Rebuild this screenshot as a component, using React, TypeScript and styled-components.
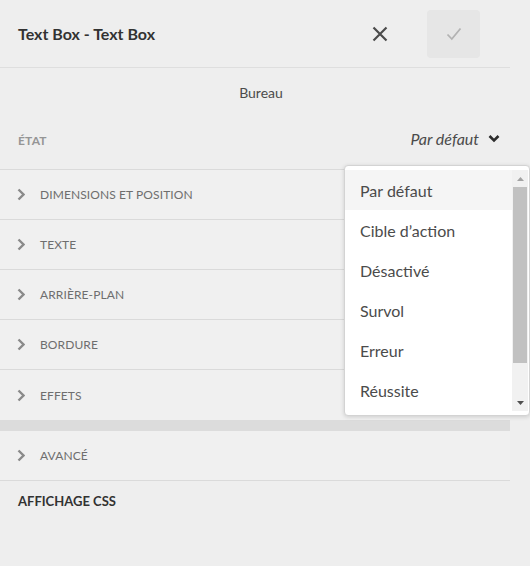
import React from "react";
import styled, { createGlobalStyle } from "styled-components";

const Global = createGlobalStyle`
  html, body { margin: 0; padding: 0; background: #eeeeee; }
  body { font-family: Lato, "Open Sans", sans-serif; color: #4b4b4b; }
  * { box-sizing: border-box; }
`;

const Root = styled.div`
  position: relative;
  width: 530px;
  height: 566px;
  background: #eeeeee;
  overflow: hidden;
`;

const Panel = styled.div`
  width: 510px;
  display: flex;
  flex-direction: column;
`;

const Header = styled.div`
  height: 68px;
  display: flex;
  align-items: center;
  padding: 0 0 0 18px;
  border-bottom: 1px solid #dedede;
`;

const Title = styled.h1`
  margin: 0;
  flex: 1;
  font-size: 16px;
  font-weight: 700;
  color: #323232;
`;

const IconButton = styled.button<{ $disabled?: boolean }>`
  width: 53px;
  height: 48px;
  border: none;
  border-radius: 4px;
  display: flex;
  align-items: center;
  justify-content: center;
  padding: 0;
  background: ${(p) => (p.$disabled ? "#e6e6e6" : "transparent")};
  margin-right: ${(p) => (p.$disabled ? "30px" : "21px")};
`;

const Breakpoint = styled.div`
  height: 48px;
  display: flex;
  align-items: center;
  justify-content: center;
  padding-left: 12px;
  font-size: 14px;
  color: #4b4b4b;
`;

const StateRow = styled.div`
  height: 53px;
  display: flex;
  align-items: center;
  justify-content: space-between;
  padding: 0 10px 8px 18px;
`;

const StateLabel = styled.span`
  font-size: 12px;
  font-weight: 700;
  color: #959595;
  letter-spacing: 0.2px;
  padding-top: 4px;
`;

const StateSelect = styled.div`
  display: flex;
  align-items: center;
  gap: 9px;
  font-size: 16px;
  font-style: italic;
  color: #4b4b4b;
`;

const Sections = styled.div`
  border-top: 1px solid #dadada;
  display: flex;
  flex-direction: column;
`;

const Row = styled.div<{ $last?: boolean }>`
  height: 50px;
  display: flex;
  align-items: center;
  gap: 15px;
  padding-left: 17px;
  background: #f0f0f0;
  border-bottom: ${(p) => (p.$last ? "none" : "1px solid #dadada")};
  font-size: 12px;
  color: #6e6e6e;
  text-transform: uppercase;
  letter-spacing: 0.1px;
`;

const Divider = styled.div`
  height: 11px;
  background: #dcdcdc;
`;

const Footer = styled.div`
  padding: 12px 0 0 18px;
  font-size: 13px;
  font-weight: 700;
  color: #323232;
`;

const Dropdown = styled.div`
  position: absolute;
  left: 344px;
  top: 165px;
  width: 186px;
  height: 251px;
  background: #ffffff;
  border: 1px solid #d3d3d3;
  border-radius: 4px;
  box-shadow: 0 1px 4px rgba(0, 0, 0, 0.15);
  padding: 4px 1px 4px 0;
  display: flex;
`;

const List = styled.ul`
  list-style: none;
  margin: 0;
  padding: 0;
  flex: 1;
`;

const Item = styled.li<{ $active?: boolean }>`
  height: 40px;
  display: flex;
  align-items: center;
  padding-left: 15px;
  font-size: 16px;
  color: #4b4b4b;
  background: ${(p) => (p.$active ? "#f5f5f5" : "transparent")};
`;

const Scrollbar = styled.div`
  width: 16px;
  background: #f1f1f1;
  display: flex;
  flex-direction: column;
`;

const ScrollArrow = styled.div`
  height: 17px;
  display: flex;
  align-items: center;
  justify-content: center;
`;

const Thumb = styled.div`
  height: 176px;
  margin: 0 1px;
  background: #c1c1c1;
`;

const Track = styled.div`
  flex: 1;
`;

const Chevron = () => (
  <svg width="8" height="13" viewBox="0 0 8 13">
    <path d="M1.5 1.5 L6.5 6.5 L1.5 11.5" fill="none" stroke="#8a8a8a" strokeWidth="2.4" />
  </svg>
);

const sections = ["Dimensions et position", "Texte", "Arrière-plan", "Bordure", "Effets"];
const states = ["Par défaut", "Cible d\u2019action", "Désactivé", "Survol", "Erreur", "Réussite"];

export default function App() {
  return (
    <Root>
      <Global />
      <Panel>
        <Header>
          <Title>Text Box - Text Box</Title>
          <IconButton aria-label="Fermer">
            <svg width="16" height="16" viewBox="0 0 16 16">
              <path d="M1.5 1.5 L14.5 14.5 M14.5 1.5 L1.5 14.5" stroke="#4b4b4b" strokeWidth="2.2" />
            </svg>
          </IconButton>
          <IconButton $disabled aria-label="Valider">
            <svg width="16" height="14" viewBox="0 0 16 14">
              <path d="M1.5 7.5 L5.8 12 L14.5 1.5" fill="none" stroke="#b3b3b3" strokeWidth="1.8" />
            </svg>
          </IconButton>
        </Header>
        <Breakpoint>Bureau</Breakpoint>
        <StateRow>
          <StateLabel>ÉTAT</StateLabel>
          <StateSelect>
            Par défaut
            <svg width="12" height="9" viewBox="0 0 12 9">
              <path d="M1.5 2 L6 6.5 L10.5 2" fill="none" stroke="#2c2c2c" strokeWidth="2.6" />
            </svg>
          </StateSelect>
        </StateRow>
        <Sections>
          {sections.map((s, i) => (
            <Row key={s} $last={i === sections.length - 1}>
              <Chevron />
              {s}
            </Row>
          ))}
          <Divider />
          <Row>
            <Chevron />
            Avancé
          </Row>
        </Sections>
        <Footer>AFFICHAGE CSS</Footer>
      </Panel>
      <Dropdown>
        <List>
          {states.map((s, i) => (
            <Item key={s} $active={i === 0}>
              {s}
            </Item>
          ))}
        </List>
        <Scrollbar>
          <ScrollArrow>
            <svg width="7" height="4" viewBox="0 0 7 4">
              <path d="M0 4 L3.5 0 L7 4 Z" fill="#a3a3a3" />
            </svg>
          </ScrollArrow>
          <Thumb />
          <Track />
          <ScrollArrow>
            <svg width="7" height="4" viewBox="0 0 7 4">
              <path d="M0 0 L3.5 4 L7 0 Z" fill="#505050" />
            </svg>
          </ScrollArrow>
        </Scrollbar>
      </Dropdown>
    </Root>
  );
}
